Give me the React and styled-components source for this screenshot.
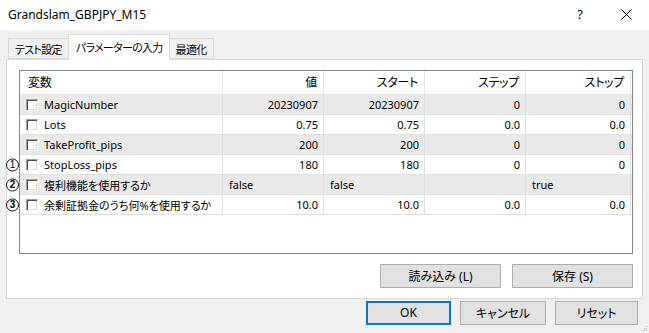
import styled, { createGlobalStyle } from "styled-components";

const GlobalStyle = createGlobalStyle`
  body {
    margin: 0;
    background: #f0f0f0;
  }
  * {
    box-sizing: border-box;
  }
`;

const params = [
  { name: "MagicNumber", cells: ["20230907", "20230907", "0", "0"] },
  { name: "Lots", cells: ["0.75", "0.75", "0.0", "0.0"] },
  { name: "TakeProfit_pips", cells: ["200", "200", "0", "0"] },
  { name: "StopLoss_pips", cells: ["180", "180", "0", "0"], mark: 1 },
  { name: "複利機能を使用するか", cells: ["false", "false", "", "true"], left: true, mark: 2 },
  { name: "余剰証拠金のうち何%を使用するか", cells: ["10.0", "10.0", "0.0", "0.0"], mark: 3 },
];

const columns = ["値", "スタート", "ステップ", "ストップ"];

export default function App() {
  return (
    <Window>
      <GlobalStyle />
      <TitleBar>
        <Title>Grandslam_GBPJPY_M15</Title>
        <CaptionButton>?</CaptionButton>
        <CaptionButton>
          <svg width="11" height="11" viewBox="0 0 11 11">
            <path d="M0.5 0.5 L10.5 10.5 M10.5 0.5 L0.5 10.5" stroke="#000" strokeWidth="1" />
          </svg>
        </CaptionButton>
      </TitleBar>
      <Body>
        <TabStrip>
          <Tab>テスト設定</Tab>
          <Tab $active>パラメーターの入力</Tab>
          <Tab>最適化</Tab>
        </TabStrip>
        <Panel>
          <ListView>
            <HeaderRow>
              <HeadCell>変数</HeadCell>
              {columns.map((c) => (
                <HeadCell key={c} $right>
                  {c}
                </HeadCell>
              ))}
            </HeaderRow>
            {params.map((p, i) => (
              <Row key={p.name} $shaded={i % 2 === 0}>
                <NameCell>
                  {p.mark && <Mark $bold={p.mark > 1}>{p.mark}</Mark>}
                  <CheckBox />
                  <span>{p.name}</span>
                </NameCell>
                {p.cells.map((v, j) => (
                  <Cell key={j} $right={!p.left}>
                    {v}
                  </Cell>
                ))}
              </Row>
            ))}
          </ListView>
          <PanelButtons>
            <Button $width={121}>読み込み (L)</Button>
            <Button $width={121}>保存 (S)</Button>
          </PanelButtons>
        </Panel>
        <Footer>
          <Button $width={85} $default>
            OK
          </Button>
          <Button $width={86}>キャンセル</Button>
          <Button $width={83}>リセット</Button>
        </Footer>
      </Body>
      <Grip>
        <svg width="6" height="6" viewBox="0 0 6 6">
          <rect x="4" y="0" width="1" height="1" fill="#bcbcbc" />
          <rect x="2" y="2" width="1" height="1" fill="#bcbcbc" />
          <rect x="4" y="2" width="1" height="1" fill="#bcbcbc" />
          <rect x="0" y="4" width="1" height="1" fill="#bcbcbc" />
          <rect x="2" y="4" width="1" height="1" fill="#bcbcbc" />
          <rect x="4" y="4" width="1" height="1" fill="#bcbcbc" />
        </svg>
      </Grip>
    </Window>
  );
}

const Window = styled.div`
  position: relative;
  width: 649px;
  height: 333px;
  background: #f0f0f0;
  font-family: "Noto Sans", "Noto Sans CJK JP", sans-serif;
  font-feature-settings: "palt";
  font-size: 11px;
  color: #000;
  overflow: hidden;
`;

const TitleBar = styled.div`
  display: flex;
  align-items: center;
  height: 30px;
  background: #fff;
`;

const Title = styled.div`
  flex: 1;
  padding-left: 8px;
  padding-bottom: 2px;
  font-size: 12px;
`;

const CaptionButton = styled.div`
  width: 46px;
  height: 30px;
  display: flex;
  align-items: center;
  justify-content: center;
  font-size: 13px;
  padding-bottom: 2px;
`;

const Body = styled.div`
  display: flex;
  flex-direction: column;
  padding: 0 6px;
`;

const TabStrip = styled.div`
  display: flex;
  align-items: flex-end;
  height: 29px;
  padding-left: 2px;
`;

const Tab = styled.div`
  position: relative;
  display: flex;
  align-items: center;
  height: ${(p) => (p.$active ? "26px" : "21px")};
  padding: ${(p) => (p.$active ? "0 6px 2px 7px" : "0 6px")};
  margin: ${(p) => (p.$active ? "0 -1px -1px -1px" : "0")};
  background: ${(p) => (p.$active ? "#fff" : "#f0f0f0")};
  border: 1px solid #d9d9d9;
  border-bottom: ${(p) => (p.$active ? "none" : "1px solid #d9d9d9")};
  z-index: ${(p) => (p.$active ? 1 : 0)};
  white-space: nowrap;
  font-size: 11px;
  letter-spacing: -0.7px;
`;

const Panel = styled.div`
  display: flex;
  flex-direction: column;
  height: 240px;
  background: #fff;
  border: 1px solid #d9d9d9;
  padding: 10px 9px 10px 12px;
`;

const ListView = styled.div`
  height: 184px;
  border: 1px solid #828790;
  background: #fff;
`;

const gridCols = "203px 101px 101px 101px 105px";

const HeaderRow = styled.div`
  display: grid;
  grid-template-columns: ${gridCols};
  height: 24px;
  border-bottom: 1px solid #e5e5e5;
`;

const HeadCell = styled.div`
  display: flex;
  align-items: center;
  justify-content: ${(p) => (p.$right ? "flex-end" : "flex-start")};
  padding: 0 6px 1px 8px;
  border-right: 1px solid #e5e5e5;
  white-space: nowrap;
  font-size: 12px;
  letter-spacing: -0.3px;
`;

const Row = styled.div`
  display: grid;
  grid-template-columns: ${gridCols};
  height: 20px;
  background: ${(p) => (p.$shaded ? "#e9e9e9" : "#fff")};
  border-bottom: 1px solid #e0e0e0;
`;

const Cell = styled.div`
  display: flex;
  align-items: center;
  justify-content: ${(p) => (p.$right ? "flex-end" : "flex-start")};
  padding: 0 5px 0 6px;
  border-right: 1px solid #e0e0e0;
  white-space: nowrap;
  overflow: hidden;
`;

const NameCell = styled(Cell)`
  position: relative;
  gap: 6px;
  padding-left: 6px;
  overflow: visible;
`;

const CheckBox = styled.span`
  flex: none;
  width: 12px;
  height: 12px;
  background: #fff;
  border: 1px solid;
  border-color: #a0a0a0 #fff #fff #a0a0a0;
  box-shadow: inset 1px 1px 0 #505050, inset -1px -1px 0 #dcdcdc;
`;

const Mark = styled.span`
  position: absolute;
  left: -14px;
  top: 50%;
  transform: translateY(-50%);
  width: 13px;
  height: 13px;
  border-radius: 50%;
  border: ${(p) => (p.$bold ? "1.5px" : "1px")} solid #111;
  background: #fff;
  display: flex;
  align-items: center;
  justify-content: center;
  font-family: "Liberation Sans", sans-serif;
  font-size: 10px;
  font-weight: ${(p) => (p.$bold ? 700 : 400)};
  line-height: 1;
`;

const PanelButtons = styled.div`
  display: flex;
  justify-content: flex-end;
  gap: 11px;
  margin-top: 10px;
`;

const Button = styled.div`
  width: ${(p) => p.$width}px;
  height: 24px;
  display: flex;
  align-items: center;
  justify-content: center;
  background: #e1e1e1;
  border: ${(p) => (p.$default ? "2px solid #0078d7" : "1px solid #adadad")};
  padding-bottom: 1px;
  white-space: nowrap;
  font-size: 12px;
`;

const Footer = styled.div`
  display: flex;
  justify-content: flex-end;
  gap: 9px;
  margin-top: 2px;
  padding-right: 5px;
`;

const Grip = styled.div`
  position: absolute;
  right: 1px;
  bottom: 1px;
  display: flex;
`;
